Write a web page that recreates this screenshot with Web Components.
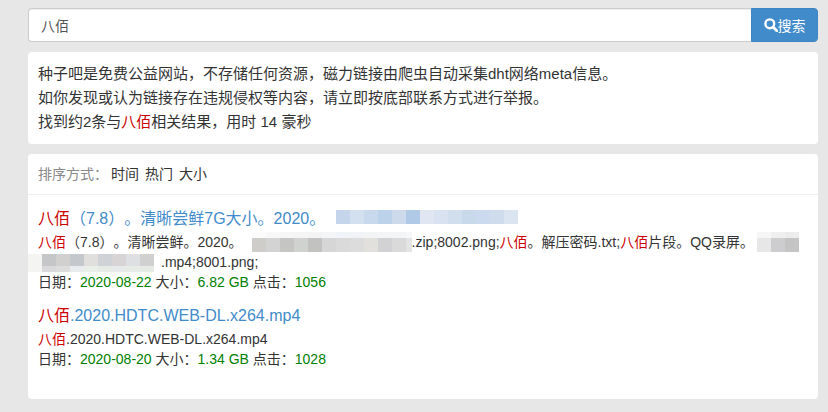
<!DOCTYPE html>
<html lang="zh"><head><meta charset="utf-8"><title>八佰</title>
<style>
html,body{margin:0;padding:0;background:#e7e7e7;}
body{font:14px/20px "Liberation Sans","Noto Sans CJK SC",sans-serif;color:#333;text-spacing-trim:space-all;}
main{display:flex;flex-direction:column;width:790px;margin-left:28px;padding-top:8px;gap:10px;}
</style></head><body>
<main>
<search-bar value="八佰"></search-bar>
<info-panel>
<div>种子吧是免费公益网站，不存储任何资源，磁力链接由爬虫自动采集dht网络meta信息。</div>
<div>如你发现或认为链接存在违规侵权等内容，请立即按底部联系方式进行举报。</div>
<div>找到约2条与<hi-lite>八佰</hi-lite>相关结果，用时 14 豪秒</div>
</info-panel>
<result-panel>
<result-item date="2020-08-22" size="6.82 GB" hits="1056">
<span slot="title"><hi-lite>八佰</hi-lite>（7.8）。清晰尝鲜7G大小。2020。<mosaic-blur main="#c5d6ec,#d3e0f0,#c8d9ed,#bcd2ea,#cddaec,#afc9e6,#e0e7f3,#d8e2f0,#d1deee,#c9d9ec,#cbdaee,#cfdcee,#dbe5f2" mh="14" style="margin:-3px 0 -3px 11px;vertical-align:3px"></mosaic-blur></span>
<span slot="desc"><hi-lite>八佰</hi-lite>（7.8）。清晰尝鲜。2020。<mosaic-blur top="#fbfbfb,#f8f8f8,#f6f6f6,#f5f5f5,#f4f4f4,#f3f5f7,#f0f3f7,#f1f3f6,#f2f4f6,#f3f5f7,#f4f5f7,#f6f7f8" main="#cfcdca,#d3d3d3,#c5c5c3,#d0d2d0,#c2c2c0,#d6d6d6,#dadada,#dcdcdc,#e2e0dd,#d2d2d4,#dadada,#e4e4e4" th="6" mh="14" style="width:160px;margin:-3px 0 -3px 9px;vertical-align:-2px"></mosaic-blur>.zip;8002.png;<hi-lite>八佰</hi-lite>。解压密码.txt;<hi-lite>八佰</hi-lite>片段。QQ录屏。<mosaic-blur top="#f6f6f6,#efefef,#ececec" main="#e6e7e6,#cdcdcf,#c4c4c4" th="6" mh="14" style="margin:-3px 0 -3px 3px;vertical-align:-2px"></mosaic-blur><br><mosaic-blur lead="14" main="#c4c6c8,#d2cfcf,#c4c8cc,#e0dfdd,#cfd3d7,#d8d4d6,#dddfe2,#d0d0d0" bot="#d9d9dc,#dcdcdc,#e8ecec,#e8efe8,#e6ebe6,#e6eaea,#e6ebe6,#e6eae4" mh="12" bh="6" style="margin:-3px 7px -3px -10px;vertical-align:-2px"></mosaic-blur>.mp4;8001.png;</span>
</result-item>
<result-item date="2020-08-20" size="1.34 GB" hits="1028">
<span slot="title"><hi-lite>八佰</hi-lite>.2020.HDTC.WEB-DL.x264.mp4</span>
<span slot="desc"><hi-lite>八佰</hi-lite>.2020.HDTC.WEB-DL.x264.mp4</span>
</result-item>
</result-panel>
</main>
<script>
function def(name,html,init){
  customElements.define(name,class extends HTMLElement{
    constructor(){super();this.attachShadow({mode:"open"}).innerHTML=html;}
    connectedCallback(){if(init)init(this);}
  });
}
def("hi-lite",`<style>:host{display:inline;color:#c00;}</style><slot></slot>`);
def("search-bar",`<style>
:host{display:flex;height:34px;}
.in{flex:1;box-sizing:border-box;border:1px solid #ccc;border-right:0;border-radius:4px 0 0 4px;background:#fff;box-shadow:inset 0 1px 1px rgba(0,0,0,.075);padding:0 12px;font:14px "Liberation Sans","Noto Sans CJK SC",sans-serif;color:#555;display:flex;align-items:center;}
.btn{width:67px;box-sizing:border-box;background:#428bca;border:1px solid #3f85c2;border-radius:0 4px 4px 0;color:#fff;display:flex;align-items:center;justify-content:center;font:14px "Liberation Sans","Noto Sans CJK SC",sans-serif;}
svg{display:block;width:14px;height:14px;}
</style><div class="in"></div><div class="btn"><svg viewBox="0 0 14 14" fill="none" stroke="#fff"><circle cx="5.8" cy="5.8" r="4.4" stroke-width="2.4"/><path d="M9 9l3.8 3.8" stroke-width="2.8" stroke-linecap="round"/></svg>搜索</div>`,
el=>{el.shadowRoot.querySelector(".in").textContent=el.getAttribute("value");});
def("info-panel",`<style>:host{display:block;background:#fff;border-radius:4px;padding:10px;font-size:15px;line-height:24px;}</style><slot></slot>`);
def("result-panel",`<style>
:host{display:block;background:#fff;border-radius:4px;height:245px;box-sizing:border-box;}
.head{height:41px;box-sizing:border-box;border-bottom:1px solid #eee;padding:0 10px;display:flex;align-items:center;gap:3px;color:#888;}
.opts{display:flex;gap:6px;color:#333;}
.body{padding:13px 10px 0;display:flex;flex-direction:column;gap:13px;}
</style><div class="head"><span>排序方式：</span><div class="opts"><span>时间</span><span>热门</span><span>大小</span></div></div><div class="body"><slot></slot></div>`);
def("result-item",`<style>
:host{display:block;}
.t{font-size:16px;line-height:22px;color:#428bca;margin-bottom:2px;}
.d{line-height:20px;}
i{font-style:normal;color:#008000;}
</style><div class="t"><slot name="title"></slot></div><div class="d"><slot name="desc"></slot></div><div class="d">日期：<i class="a"></i> 大小：<i class="b"></i> 点击：<i class="c"></i></div>`,
el=>{const s=el.shadowRoot;s.querySelector(".a").textContent=el.getAttribute("date");s.querySelector(".b").textContent=el.getAttribute("size");s.querySelector(".c").textContent=el.getAttribute("hits");});
def("mosaic-blur",`<style>:host{display:inline-block;overflow:hidden;}
.r{display:flex;}.r span{flex:none;width:14px;height:100%;}</style><div class="w"></div>`,
el=>{
  const wrap=el.shadowRoot.querySelector(".w");
  const lead=+el.getAttribute("lead")||0;
  const rows=[["top","th"],["main","mh"],["bot","bh"]];
  for(const [k,hk] of rows){
    const v=el.getAttribute(k);
    if(!v)continue;
    const r=document.createElement("div");
    r.className="r";
    r.style.height=(el.getAttribute(hk)||14)+"px";
    if(lead){const p=document.createElement("span");p.style.width=lead+"px";p.style.background="#f4f4f2";r.appendChild(p);}
    for(const c of v.split(",")){const s=document.createElement("span");s.style.background=c;r.appendChild(s);}
    wrap.appendChild(r);
  }
});
</script>
</body></html>
